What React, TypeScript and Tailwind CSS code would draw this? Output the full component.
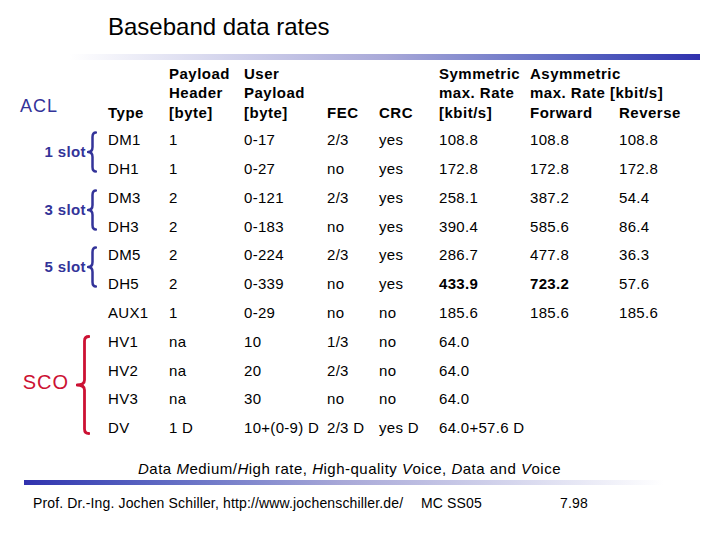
import React from "react";

const NAVY = "#333399";
const RED = "#cc1133";

function Brace({ w, h, px, vx, color, sw = 2.5 }: { w: number; h: number; px: number; vx: number; color: string; sw?: number }) {
  const m = h / 2;
  const d = `M ${w - 1} 1.5 Q ${vx} 1.5 ${vx} 6 L ${vx} ${m - 5} Q ${vx} ${m} ${px} ${m} Q ${vx} ${m} ${vx} ${m + 5} L ${vx} ${h - 6} Q ${vx} ${h - 1.5} ${w - 1} ${h - 1.5}`;
  return (
    <svg width={w} height={h} viewBox={`0 0 ${w} ${h}`} className="shrink-0">
      <path d={d} fill="none" stroke={color} strokeWidth={sw} strokeLinecap="round" strokeLinejoin="round" />
    </svg>
  );
}

const rows: string[][] = [
  ["DM1", "1", "0-17", "2/3", "yes", "108.8", "108.8", "108.8"],
  ["DH1", "1", "0-27", "no", "yes", "172.8", "172.8", "172.8"],
  ["DM3", "2", "0-121", "2/3", "yes", "258.1", "387.2", "54.4"],
  ["DH3", "2", "0-183", "no", "yes", "390.4", "585.6", "86.4"],
  ["DM5", "2", "0-224", "2/3", "yes", "286.7", "477.8", "36.3"],
  ["DH5", "2", "0-339", "no", "yes", "**433.9", "**723.2", "57.6"],
  ["AUX1", "1", "0-29", "no", "no", "185.6", "185.6", "185.6"],
  ["HV1", "na", "10", "1/3", "no", "64.0", "", ""],
  ["HV2", "na", "20", "2/3", "no", "64.0", "", ""],
  ["HV3", "na", "30", "no", "no", "64.0", "", ""],
  ["DV", "1 D", "10+(0-9) D", "2/3 D", "yes D", "64.0+57.6 D", "", ""],
];

function Head({ lines, col }: { lines: string[]; col: number }) {
  return (
    <div
      className="row-start-1 flex flex-col justify-end pb-[4px] font-bold text-[15px] leading-[19.5px] tracking-[0.5px] whitespace-nowrap"
      style={{ gridColumnStart: col }}
    >
      {lines.map((l, i) => (
        <div key={i}>{l}</div>
      ))}
    </div>
  );
}

export default function App() {
  return (
    <div className="w-[720px] h-[540px] bg-white text-black overflow-hidden" style={{ fontFamily: '"Liberation Sans", Arial, sans-serif' }}>
      <div className="pt-[13px] pl-[108px] text-[24px] leading-[28px]">Baseband data rates</div>
      <div className="mt-[13px] ml-[70px] w-[630px] h-[6px] bg-gradient-to-r from-[#ffffff] via-[#a9a9d8] to-[#3131ae]" />

      <div className="grid grid-cols-[108px_61px_75px_83px_52px_60px_91px_89px_1fr] grid-rows-[66px_repeat(11,28.8px)]">
        <div className="col-start-1 row-start-1 flex items-end pl-[20px] pb-[10px] text-[18px] leading-[20px] tracking-[1px]" style={{ color: NAVY }}>
          ACL
        </div>
        <Head col={2} lines={["Type"]} />
        <Head col={3} lines={["Payload", "Header", "[byte]"]} />
        <Head col={4} lines={["User", "Payload", "[byte]"]} />
        <Head col={5} lines={["FEC"]} />
        <Head col={6} lines={["CRC"]} />
        <Head col={7} lines={["Symmetric", "max. Rate", "[kbit/s]"]} />
        <Head col={8} lines={["Asymmetric", "max. Rate [kbit/s]", "Forward"]} />
        <Head col={9} lines={["Reverse"]} />

        {[
          { label: "1 slot", row: "row-start-2" },
          { label: "3 slot", row: "row-start-4" },
          { label: "5 slot", row: "row-start-6" },
        ].map((g) => (
          <div key={g.label} className={`col-start-1 ${g.row} row-span-2 flex items-center justify-end pr-[11px] pb-[5px] gap-[1px]`}>
            <span className="font-bold text-[15px] tracking-[0.4px]" style={{ color: NAVY }}>{g.label}</span>
            <Brace w={10} h={42} px={1} vx={5.5} color={NAVY} />
          </div>
        ))}

        <div className="col-start-1 row-start-9 row-span-4 flex items-center justify-end pr-[18px] gap-[7px]">
          <span className="text-[20px] tracking-[1px] mb-[6px]" style={{ color: RED }}>SCO</span>
          <Brace w={14} h={100} px={1} vx={8.5} color={RED} sw={2.8} />
        </div>

        {rows.map((r, ri) =>
          r.map((c, ci) => {
            const bold = c.startsWith("**");
            const t = bold ? c.slice(2) : c;
            return (
              <div
                key={`${ri}-${ci}`}
                className={`flex items-center whitespace-nowrap text-[15px] tracking-[0.3px] ${bold ? "font-bold" : ""}`}
                style={{ gridColumnStart: ci + 2, gridRowStart: ri + 2 }}
              >
                {t}
              </div>
            );
          })
        )}
      </div>

      <div className="mt-[16px] pl-[138px] text-[15px] leading-[20px] tracking-[0.5px] whitespace-nowrap">
        <i>D</i>ata <i>M</i>edium/<i>H</i>igh rate, <i>H</i>igh-quality <i>V</i>oice, <i>D</i>ata and <i>V</i>oice
      </div>
      <div className="mt-[1px] ml-[24px] w-[640px] h-[5px] bg-gradient-to-r from-[#3131ae] via-[#a9a9d8] to-[#ffffff]" />

      <div className="mt-[9px] flex pl-[33px] text-[14px] leading-[18px] tracking-[0.15px] whitespace-nowrap">
        <span className="w-[388px]">Prof. Dr.-Ing. Jochen Schiller, http://www.jochenschiller.de/</span>
        <span className="w-[139px]">MC SS05</span>
        <span>7.98</span>
      </div>
    </div>
  );
}
